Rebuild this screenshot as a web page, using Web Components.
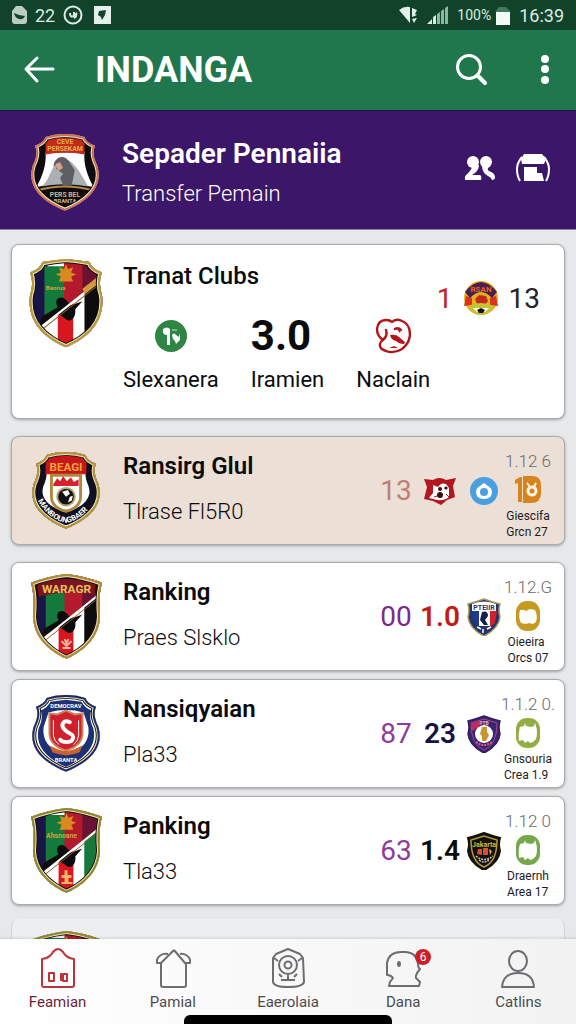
<!DOCTYPE html>
<html lang="id">

<head>
  <meta charset="UTF-8" />
  <meta name="viewport" content="width=device-width, initial-scale=1.0" />
  <title>INDANGA</title>
  <style>
    body {
      margin: 0;
      font-family: Roboto, "Liberation Sans", sans-serif;
      color: #0b0b0d;
    }
  </style>
</head>

<body>
  <app-shell>
    <status-bar slot="top"></status-bar>
    <app-bar slot="top">INDANGA</app-bar>
    <club-banner slot="top">
      <club-crest slot="crest" kind="eagle"></club-crest>
      Sepader Pennaiia
      <span slot="subtitle">Transfer Pemain</span>
    </club-banner>

    <match-card>
      <club-crest slot="crest" kind="stripes"></club-crest>
      Tranat Clubs
      <club-mark slot="home" kind="green"></club-mark>
      <span slot="home-name">Slexanera</span>
      <span slot="score">3.0</span>
      <span slot="score-name">Iramien</span>
      <club-mark slot="away" kind="face"></club-mark>
      <span slot="away-name">Naclain</span>
      <span slot="lost">1</span>
      <club-mark slot="rival" kind="round"></club-mark>
      <span slot="won">13</span>
    </match-card>

    <rank-card tone="sand" style="--first: #c07f74">
      <club-crest slot="crest" kind="ball"></club-crest>
      Ransirg Glul
      <span slot="subtitle">Tlrase Fl5R0</span>
      <span slot="first">13</span>
      <club-mark slot="second" kind="bear"></club-mark>
      <club-mark slot="emblem" kind="blue"></club-mark>
      <span slot="date">1.12 6</span>
      <club-mark slot="chip" kind="orange"></club-mark>
      <span slot="note">Giescifa<br>Grcn 27</span>
    </rank-card>

    <card-group>
      <rank-card style="--first: #7b2a8c; --second: #c41a14">
        <club-crest slot="crest" kind="banner"></club-crest>
        Ranking
        <span slot="subtitle">Praes Slsklo</span>
        <span slot="first">00</span>
        <span slot="second">1.0</span>
        <club-mark slot="emblem" kind="tricolor"></club-mark>
        <span slot="date">1.12.G</span>
        <club-mark slot="chip" kind="gold"></club-mark>
        <span slot="note">Oieeira<br>Orcs 07</span>
      </rank-card>
      <rank-card style="--first: #8e3c9c; --second: #1a1240">
        <club-crest slot="crest" kind="navy"></club-crest>
        Nansiqyaian
        <span slot="subtitle">Pla33</span>
        <span slot="first">87</span>
        <span slot="second">23</span>
        <club-mark slot="emblem" kind="violet"></club-mark>
        <span slot="date">1.1.2 0.</span>
        <club-mark slot="chip" kind="lime"></club-mark>
        <span slot="note">Gnsouria<br>Crea 1.9</span>
      </rank-card>
      <rank-card style="--first: #8e3c9c; --second: #0b0b0d">
        <club-crest slot="crest" kind="garuda"></club-crest>
        Panking
        <span slot="subtitle">Tla33</span>
        <span slot="first">63</span>
        <span slot="second">1.4</span>
        <club-mark slot="emblem" kind="black"></club-mark>
        <span slot="date">1.12 0</span>
        <club-mark slot="chip" kind="leaf"></club-mark>
        <span slot="note">Draernh<br>Area 17</span>
      </rank-card>
      <rank-card tone="faded">
        <club-crest slot="crest" kind="garuda"></club-crest>
        pemad
      </rank-card>
    </card-group>

    <tab-bar slot="bottom">
      <tab-item icon="home" active>Feamian</tab-item>
      <tab-item icon="house">Pamial</tab-item>
      <tab-item icon="camera">Eaerolaia</tab-item>
      <tab-item icon="head" badge="6">Dana</tab-item>
      <tab-item icon="person">Catlins</tab-item>
    </tab-bar>
  </app-shell>

  <script>
    // Shield outlines: [path, viewBox, width]
    const tall = ["M38 1Q27 2 15 4Q13 11 3 14Q7 24 3 36C0 58 12 76 38 87C64 76 76 58 73 36Q69 24 73 14Q63 11 61 4Q49 2 38 1Z", "1 0 74 88", 76];
    const wide = ["M38 1Q28 1 18 4Q16 10 7 13Q11 21 5 33C-1 52 9 68 38 80C67 68 77 52 71 33Q65 21 69 13Q60 10 58 4Q48 1 38 1Z", "2 0 72 81", 70];
    const pointed = ["M38 1Q20 3 2 10Q6 24 4 44C5 64 18 78 38 87C58 78 71 64 72 44Q70 24 74 10Q56 3 38 1Z", "0 0 76 88", 75];

    // Vertical bands with a white diagonal, shared by three of the crests
    const bands = (right) => `
      <path fill="#1b1446" d="M0 0h20v88H0z"/>
      <path fill="#147a3c" d="M17 8h20v60H17z"/>
      <path fill="#b51a2c" d="M36 0h40v50H36z"/>
      <path fill="#6b1233" d="M54 0h22v40H54z"/>
      <path fill="#fff" d="M8 72L74 18v70H8z"/>
      <path fill="#d8161f" d="M30 56l15-12v44H30z"/>
      <path fill="${right}" d="M56 33l20-15v70H56z"/>
      <path fill="#0c0b0d" d="M10 68l6-12 14-8c-4-7 1-12 7-8l6 6 11-4-7 8c1 10-6 14-11 8l-5-3z"/>
      <path stroke="#fff" stroke-width="2" d="M9 71L71 22"/>
      <path stroke="#8a5a26" stroke-width="1" d="M13 71L71 25"/>`;

    const star = `<path fill="#d98a1f" d="M38 6l2 5 5-2-2 5 5 2-5 2 2 5H31l2-5-5-2 5-2-2-5 5 2z"/>`;

    const crests = {
      eagle: [wide, "#c9705a", `
        <path fill="#0e0c10" d="M0 0h76v88H0z"/>
        <path fill="#fdfdfd" d="M18 20h40c-1 12 3 25 10 36-18-5-42-5-60 0 7-11 11-24 10-36z"/>
        <path fill="#c42a1c" d="M18 2h40v20q-20-4-40 0z"/>
        <path fill="#aab0b4" d="M14 55c8-6 9-18 16-26l8-2c9 1 17 16 24 28-18-3-32-3-48 0z"/>
        <path fill="#5d5f63" d="M27 30c4-7 11-7 15-1l6 9-3 16H36l-3-8 3-4-7-5 1-4-4 1z"/>
        <path fill="#d6a08c" d="M28 32l5-2 3 6-5 3z"/>
        <path fill="none" stroke="#b48a44" stroke-width="2" d="M9 59q29-8 58 0"/>
        <g fill="#e8b04a" font-size="7" font-weight="700" text-anchor="middle">
          <text x="38" y="11">CEVE</text><text x="38" y="19">PERSEKAM</text>
          <text x="38" y="66" fill="#c8b68a">PERS BEL</text><text x="38" y="72" fill="#c8b68a" font-size="6">BRANTA</text>
        </g>`],
      stripes: [tall, "#b59b3c", `${bands("#0c0c0e")}${star}
        <path fill="#d79a3a" d="M54 30l14-11 2 5-14 11z"/>
        <text x="28" y="31" fill="#cfa33c" font-size="6" font-weight="700" text-anchor="middle">Beorua</text>`],
      ball: [wide, "#b3923a", `
        <path fill="#0e1020" d="M0 0h76v88H0z"/>
        <path fill="#fff" d="M18 23h40c0 10 5 13 4 21-2 10-13 16-24 19-11-3-22-9-24-19-1-8 4-11 4-21z"/>
        <path fill="#c8161c" d="M17 2h42v22H17z"/>
        <path fill="#fff" stroke="#b08a3c" stroke-width="3" d="M23 25h30v22q0 11-15 15-15-4-15-15z"/>
        <path fill="#d6202a" d="M25 34l4-6 3 3 3-5 4 5 4-4 3 5 5-3v7H25z"/>
        <circle cx="38" cy="47" r="10" fill="#b9a06c"/>
        <circle cx="38" cy="47" r="8" fill="#101012"/>
        <path fill="#fff" d="M34 42l6-2 2 4-4 3zM42 47l3-1-1 5-4 2z"/>
        <text x="38" y="21" fill="#f0a53a" font-size="12" font-weight="700" text-anchor="middle">BEAGI</text>
        <path id="arc" fill="none" d="M9 51Q20 71 38 74Q56 71 67 51"/>
        <text fill="#fff" font-size="8" font-weight="700"><textPath href="#arc">MANBOUNGBAER</textPath></text>`],
      banner: [pointed, "#b08a35", `${bands("#0c0c0e")}
        <path fill="#2a0a10" d="M0 0h76v22Q38 14 4 26z"/>
        <path fill="#7c1420" d="M8 10Q38 2 68 10l-2 12Q38 16 10 24z"/>
        <text x="38" y="20" fill="#e8c05a" font-size="12" font-weight="700" text-anchor="middle">WARAGR</text>
        <path fill="none" stroke="#f0b7a0" stroke-width="2" d="M33 69l5 5 5-5M34 76h8M36 67l2 4 2-4"/>`],
      navy: [wide, "#1a2c6b", `
        <path fill="#fff" d="M0 0h76v88H0z"/>
        <path fill="#1d3274" d="M38 6L22 8Q19 14 12 17Q15 24 10 35C6 51 15 65 38 75C61 65 70 51 66 35Q61 24 64 17Q57 14 54 8Z"/>
        <path fill="#fff" d="M20 19Q38 14 56 19L61 34C63 49 53 59 38 63C23 59 13 49 15 34Z"/>
        <path fill="#d0202c" stroke="#c9825c" stroke-width="2" d="M21 20l8 1 9-4 9 4 8-1v20q0 13-17 18-17-5-17-18z"/>
        <path fill="none" stroke="#fff" stroke-width="4" stroke-linecap="round" d="M42 29c-6-3-10 2-6 7s11 5 9 10-11 4-13 1"/>
        <path fill="none" stroke="#fff" stroke-width="1" d="M25 27v16q1 6 6 9M51 27v16q-1 6-5 9"/>
        <path fill="#c9622c" d="M21 53l9 4q8 3 16 0l9-4-3 7q-14 6-28 0z"/>
        <g fill="#fff" font-size="6" font-weight="700" text-anchor="middle">
          <text x="38" y="14">DEMOCRAV</text><text x="38" y="70">BRANTA</text>
        </g>`],
      garuda: [pointed, "#8f8a2c", `${bands("#15793d")}${star}
        <text x="33" y="31" fill="#cfa33c" font-size="7" font-weight="700" text-anchor="middle">Ahsnoane</text>
        <path fill="#f0b76a" d="M36 64h3v5h4v3h-3v4h4v2H33v-2h3v-4h-3v-3h3z"/>`],
    };

    class ClubCrest extends HTMLElement {
      connectedCallback() {
        const [[shape, box, width], rim, art] = crests[this.getAttribute("kind")];
        this.attachShadow({ mode: "open" }).innerHTML = `
          <style>
            :host { display: block; width: ${width}px; }
            svg { display: block; width: 100%; height: auto; }
          </style>
          <svg viewBox="${box}" aria-hidden="true">
            <clipPath id="shield"><path d="${shape}"/></clipPath>
            <g clip-path="url(#shield)">${art}
              <path d="${shape}" fill="none" stroke="#14110c" stroke-width="8"/>
              <path d="${shape}" fill="none" stroke="#f3e3c0" stroke-width="6"/>
              <path d="${shape}" fill="none" stroke="${rim}" stroke-width="4"/>
            </g>
          </svg>`;
      }
    }

    const small = "M18 1Q10 4 2 6Q4 12 2 19C3 29 10 34 18 38C26 34 33 29 34 19Q32 12 34 6Q26 4 18 1Z";
    const chip = (color, cut) => `
      <rect x="1" y="0" width="24" height="30" rx="11" fill="${color}"/>
      <path fill="#fff" d="${cut}"/>`;
    const ragged = "M5 9l4-1 1-3 1 3 5 1 3-1 1-3 1 3q2 6 0 13l-3 3-3 1-2-2-3 2-2-3-4 1Q3 15 5 9z";

    const marks = {
      green: [32, 32, `<circle cx="16" cy="16" r="16" fill="#2e8544"/>
        <path fill="#fff" d="M8 9q4-3 7 0v16h-3V15q-5 0-4-6zM17 15q2-3 4 0l3 2 1-4v7l-4 4q0-3-3-5z"/>
        <path stroke="#cfe6d4" d="M17 10h5"/>`],
      face: [36, 38, `<path fill="none" stroke="#b5141a" stroke-width="2.4" stroke-linejoin="round" stroke-linecap="round"
        d="M11 13q2 6-3 10-6-4-6-11 1-9 9-9 4 0 6 2 4-4 10-1 8 3 8 14-1 9-8 14-8 5-16 2-7-2-6-7 0-2 3-4M20 12q3-2 6 1"/>
        <path fill="#b5141a" d="M15 18q6-1 9 2l6 5-1 2q-5 0-8-3-5-1-6-6zM14 31l5-2 4 2zM21 11l5 1-1 4z"/>`],
      round: [36, 36, `<circle cx="18" cy="18" r="17" fill="#e3b020"/>
        <path fill="#d8361c" d="M1 26l2-10 6 2v7zM35 26l-2-10-6 2v7z"/>
        <path fill="#4a1f4d" d="M2 12Q18-8 34 12l-5 6Q18 6 7 18z"/>
        <text x="18" y="12" fill="#e8622c" font-size="8" font-weight="700" text-anchor="middle">RSAN</text>
        <path fill="#c42a1c" d="M12 19l4-4 7 1 2 5-4 5h-6z"/>
        <path fill="#c3c432" d="M5 26q13-6 26 0-5 9-13 9T5 26z"/>
        <path fill="#fff" d="M10 28h16l-4 4h-8z"/>
        <path fill="#14110f" d="M14 30l4-2 4 2-2 3h-4z"/>`],
      bear: [34, 30, `<path fill="#b5161e" d="M1 3l9 1q6-4 13 0l10-2-3 8 2 11-8 3-6 5-8-4-9-2 3-12z"/>
        <path fill="#fff" d="M10 9l5 2q3-5 8-3l3 4v9q-5 4-12 3l-8-2q2-3 4-5z"/>
        <circle cx="17" cy="13" r="2" fill="#3a0a0c"/><circle cx="23" cy="12" r="1.6" fill="#3a0a0c"/><circle cx="17" cy="19" r="3" fill="#3a0a0c"/>
        <path stroke="#b5161e" d="M23 18l3 3M11 21l3-1"/>`],
      blue: [28, 28, `<circle cx="14" cy="14" r="14" fill="#4a9fe0"/>
        <path fill="#fff" d="M14 6l4 3q4 2 4 6 0 7-8 7t-8-7q0-4 4-6z"/>
        <circle cx="14" cy="15" r="4" fill="#4a9fe0"/>`],
      orange: [28, 30, `<path fill="#d8841c" d="M1 5l5-3h2v25H4V8L1 9zM9 1h9q9 0 9 9v8q0 10-10 10H9z"/>
        <circle cx="18" cy="16" r="4" fill="none" stroke="#fdf3e4" stroke-width="3"/>
        <path stroke="#fdf3e4" stroke-width="2" d="M13 8l3 4M22 8l-2 4"/>`],
      gold: [26, 30, chip("#c79a22", "M5 9l4 0 2 1 4-2 5 1q3 6 1 12l-3 2-4-1-3 1-5-1q-3-6-1-13z")],
      lime: [26, 30, chip("#93ad42", ragged)],
      leaf: [26, 30, chip("#74a84c", ragged)],
      tricolor: [36, 38, `<path fill="#26336a" stroke="#a59a5c" stroke-width="1.5" d="${small}"/>
        <path fill="#fff" d="M6 6q12-5 24 0v7H6z"/><path fill="#1d3a8c" d="M5 13h8v15l-5-4z"/>
        <path fill="#fff" d="M13 12h11v16H13z"/><path fill="#d0222c" d="M24 13h7l-2 12-5 4z"/>
        <path fill="#14204c" d="M16 14q6-2 6 4l-3 4 3 5h-4l-4-5z"/>
        <text x="18" y="12" fill="#26336a" font-size="7" font-weight="700" text-anchor="middle">PTEIIR</text>
        <path stroke="#fff" stroke-width="1.5" d="M11 29l4 2M17 31v4M21 31l4-2"/>`],
      violet: [36, 38, `<path fill="#3b2470" stroke="#34205c" stroke-width="1.5" d="${small}"/>
        <path fill="none" stroke="#a04a8a" d="M18 4L5 8q0 22 13 27Q31 30 31 8z"/>
        <path fill="#c42a5c" d="M6 8l7-2v6l-7 4z"/>
        <circle cx="18" cy="19" r="9" fill="#fff"/>
        <path fill="#c9952e" d="M16 12h5v5l2 3-3 6h-4v-5l-2-2z"/>
        <text x="18" y="10" fill="#e5b8d8" font-size="5" font-weight="700" text-anchor="middle">PTB</text>
        <path stroke="#e0588a" stroke-width="2" stroke-dasharray="2 1" fill="none" d="M10 27q8 6 16 0"/>`],
      black: [36, 38, `<path fill="#121110" stroke="#14120c" stroke-width="2" d="${small}"/>
        <path fill="none" stroke="#b59a34" stroke-width="1.5" d="M18 4L5 8q0 22 13 27Q31 30 31 8z"/>
        <text x="18" y="15" fill="#d8b83a" font-size="7" font-weight="700" text-anchor="middle">Jakarta</text>
        <path fill="#d8502c" d="M12 17l4 0 0 6-5-1zM17 16h5v7h-5z"/>
        <path fill="#e8a06a" d="M23 17l3 2-2 4z"/>
        <path stroke="#c9c4b4" stroke-width="1.5" stroke-dasharray="2 1" fill="none" d="M10 24q8 7 17 0M13 28q5 4 10 0"/>`],
    };

    class ClubMark extends HTMLElement {
      connectedCallback() {
        const [w, h, art] = marks[this.getAttribute("kind")];
        this.attachShadow({ mode: "open" }).innerHTML = `
          <style>
            :host { display: block; }
            svg { display: block; }
          </style>
          <svg width="${w}" height="${h}" viewBox="0 0 ${w} ${h}" aria-hidden="true">${art}</svg>`;
      }
    }

    class AppShell extends HTMLElement {
      connectedCallback() {
        this.attachShadow({ mode: "open" }).innerHTML = `
          <style>
            :host {
              display: flex;
              flex-direction: column;
              height: 100vh;
              background: #e7e8e9;
            }
            main {
              flex: 1;
              min-height: 0;
              overflow: hidden;
              display: flex;
              flex-direction: column;
              gap: 17px;
              padding: 14px 11px 0;
            }
            ::slotted(*) { flex: none; }
          </style>
          <slot name="top"></slot>
          <main><slot></slot></main>
          <slot name="bottom"></slot>`;
      }
    }

    class StatusBar extends HTMLElement {
      connectedCallback() {
        this.attachShadow({ mode: "open" }).innerHTML = `
          <style>
            :host {
              display: flex;
              justify-content: space-between;
              align-items: center;
              height: 30px;
              padding: 0 12px;
              background: #10432a;
              color: #dcebe2;
              font-size: 18px;
            }
            div { display: flex; align-items: center; gap: 8px; }
            .battery { font-size: 14px; margin: 0 -4px 0 0; }
            svg { display: block; }
          </style>
          <div>
            <svg width="15" height="20" viewBox="0 0 15 20"><path fill="#b9cdc2" d="M4 1h6l5 5v10q0 3-3 3H3q-3 0-3-3V6z"/><path fill="#10432a" d="M2 8l5 2 6 1q-2 4-6 3-4-1-5-6z"/></svg>
            <span>22</span>
            <svg width="20" height="20" viewBox="0 0 20 20" fill="none" stroke="#dcebe2" stroke-width="2"><circle cx="10" cy="10" r="8.5"/><path d="M7 8q0 5 4 3V7M11 11l3-3M13 8q1 4-2 5"/></svg>
            <svg width="26" height="18" viewBox="0 0 26 18"><path fill="#e4f1ea" d="M3 0h17v18H3z"/><path fill="#10432a" d="M8 5l7-1-1 5-3 5-1-3-3-2z"/></svg>
          </div>
          <div>
            <svg width="20" height="18" viewBox="0 0 20 18"><path fill="#e4f1ea" d="M0 4q5-4 11-3v16zM13 2l5 2-2 4 2 1-5 2zM13 13l5-1-3 5z"/></svg>
            <svg width="22" height="18" viewBox="0 0 22 18"><path fill="#dcebe2" d="M0 18l5-5v5zM6 18v-7l3-2v9z"/><path fill="#8fb5a0" d="M10 8l3-2v12h-3zM14 5l3-2v15h-3zM18 2l3-2v18h-3z"/></svg>
            <span class="battery">100%</span>
            <svg width="16" height="19" viewBox="0 0 16 19"><path fill="#3f7a5b" d="M4 1h7l5 5H0z"/><path fill="#f2faf6" d="M1 6h14v13H1z"/></svg>
            <span>16:39</span>
          </div>`;
      }
    }

    class AppBar extends HTMLElement {
      connectedCallback() {
        this.attachShadow({ mode: "open" }).innerHTML = `
          <style>
            :host {
              display: flex;
              align-items: center;
              height: 80px;
              padding: 0 8px 0 16px;
              background: #21774d;
              color: #fff;
            }
            button {
              all: unset;
              outline: revert;
              display: grid;
              place-items: center;
              width: 46px;
              height: 46px;
            }
            h1 { flex: 1; margin: 0 0 0 33px; font-size: 36px; font-weight: 700; line-height: 40px; }
            .more { margin-left: 27px; }
            svg { fill: none; stroke: currentColor; stroke-width: 3; stroke-linecap: round; stroke-linejoin: round; }
          </style>
          <button aria-label="Back"><svg width="32" height="30" viewBox="0 0 32 30"><path d="M30 14H3M14 3L3 14l11 12"/></svg></button>
          <h1><slot></slot></h1>
          <button aria-label="Search"><svg width="32" height="32" viewBox="0 0 32 32"><circle cx="13" cy="13" r="11.5"/><path stroke-width="4" d="M22 22l7 7"/></svg></button>
          <button class="more" aria-label="More"><svg width="10" height="30" viewBox="0 0 10 30" style="fill: currentColor; stroke: none"><circle cx="5" cy="4" r="4"/><circle cx="5" cy="14" r="4"/><circle cx="5" cy="25" r="4"/></svg></button>`;
      }
    }

    class ClubBanner extends HTMLElement {
      connectedCallback() {
        this.attachShadow({ mode: "open" }).innerHTML = `
          <style>
            :host {
              display: flex;
              align-items: center;
              box-sizing: border-box;
              height: 120px;
              padding: 0 20px 0 27px;
              border-top: 1px solid #1b1745;
              border-bottom: 1px solid #8d80a3;
              background: #3c1668;
              color: #fff;
            }
            ::slotted(club-crest) { margin: 4px 3px 0; }
            .text { flex: 1; margin-left: 19px; padding-top: 6px; }
            h2 { margin: 0; font-size: 28px; font-weight: 600; line-height: 32px; }
            p { margin: 10px 0 0; font-size: 22px; font-weight: 300; line-height: 28px; }
            .actions { display: flex; gap: 7px; margin-bottom: 4px; }
            button {
              all: unset;
              outline: revert;
              display: grid;
              place-items: center;
              width: 46px;
              height: 46px;
            }
            button svg { fill: currentColor; }
          </style>
          <slot name="crest"></slot>
          <div class="text">
            <h2><slot></slot></h2>
            <p><slot name="subtitle"></slot></p>
          </div>
          <div class="actions">
            <button aria-label="Members">
              <svg width="32" height="28" viewBox="0 0 32 28"><circle cx="9" cy="8" r="6"/><circle cx="22" cy="8" r="6"/><path d="M8 12l7-1q0 6-7 10h8q2 1 1 5H1q-1-3 1-5 6-5 6-9zM18 11l8 1q-4 3-1 5 6 2 6 6 0 3-3 3-1-3-4-4-6-3-6-11z"/></svg>
            </button>
            <button aria-label="Shop">
              <svg width="34" height="30" viewBox="0 0 34 30"><path d="M8 1h18l4 5-2 5H6L5 6zM8 14h13v6h5l2 8H8z"/><path fill="none" stroke="currentColor" stroke-width="2" d="M6 4q-5 6-5 12 0 7 3 12M28 4q5 6 5 12 0 7-3 12"/></svg>
            </button>
          </div>`;
      }
    }

    const cardStyles = `
      :host {
        display: flex;
        box-sizing: border-box;
        border: 1px solid #a9abae;
        border-radius: 8px;
        background: #fff;
        box-shadow: 0 1px 3px rgb(0 0 0 / 0.3);
      }
      .crest { flex: none; display: grid; justify-items: center; width: 76px; }
      h3 { margin: 0; font-size: 24px; line-height: 28px; white-space: nowrap; }
    `;

    class MatchCard extends HTMLElement {
      connectedCallback() {
        this.attachShadow({ mode: "open" }).innerHTML = `
          <style>
            ${cardStyles}
            :host { align-items: flex-start; min-height: 175px; padding: 13px 24px 0 16px; }
            .body { flex: 1; min-width: 0; margin-left: 19px; padding-top: 4px; }
            h3 { font-weight: 500; }
            .teams {
              display: grid;
              grid-template-columns: repeat(3, max-content);
              grid-template-rows: 60px 28px;
              column-gap: 32px;
              margin-top: 16px;
              place-items: center;
              font-size: 22px;
              line-height: 28px;
            }
            .score { justify-self: start; font-size: 42px; font-weight: 700; }
            .record { display: flex; align-items: center; gap: 10px; height: 40px; margin-top: 20px; font-size: 28px; color: #22232c; }
            .lost { color: #c2202a; }
          </style>
          <div class="crest"><slot name="crest"></slot></div>
          <div class="body">
            <h3><slot></slot></h3>
            <div class="teams">
              <slot name="home"></slot>
              <div class="score"><slot name="score"></slot></div>
              <slot name="away"></slot>
              <slot name="home-name"></slot>
              <slot name="score-name"></slot>
              <slot name="away-name"></slot>
            </div>
          </div>
          <div class="record">
            <span class="lost"><slot name="lost"></slot></span>
            <slot name="rival"></slot>
            <slot name="won"></slot>
          </div>`;
      }
    }

    class RankCard extends HTMLElement {
      connectedCallback() {
        this.attachShadow({ mode: "open" }).innerHTML = `
          <style>
            ${cardStyles}
            :host { align-items: center; min-height: 109px; padding: 0 14px 0 16px; }
            :host([tone="sand"]) { background: #ecdfd5; }
            :host([tone="faded"]) {
              margin-top: 6px;
              background: #edeeef;
              border-color: transparent #d3d5d7;
              box-shadow: none;
            }
            .body { flex: 1; min-width: 0; margin-left: 19px; padding-bottom: 4px; }
            h3 { font-weight: 600; }
            p { min-height: 28px; margin: 18px 0 0; font-size: 22px; font-weight: 300; line-height: 28px; }
            .stats {
              display: grid;
              grid-template-columns: repeat(4, 44px);
              place-items: center;
              font-size: 28px;
              white-space: nowrap;
            }
            .first { color: var(--first); }
            .second { color: var(--second); font-weight: 600; }
            .detail { display: grid; justify-items: center; padding-top: 10px; }
            .date { font-size: 17px; font-weight: 300; line-height: 20px; color: #6b6b6f; }
            .chip { height: 30px; margin: 4px 0 3px; }
            .note { font-size: 12px; line-height: 16px; color: #1c1c1e; }
          </style>
          <div class="crest"><slot name="crest"></slot></div>
          <div class="body">
            <h3><slot></slot></h3>
            <p><slot name="subtitle"></slot></p>
          </div>
          <div class="stats">
            <div class="first"><slot name="first"></slot></div>
            <div class="second"><slot name="second"></slot></div>
            <slot name="emblem"></slot>
            <div class="detail">
              <div class="date"><slot name="date"></slot></div>
              <div class="chip"><slot name="chip"></slot></div>
              <div class="note"><slot name="note"></slot></div>
            </div>
          </div>`;
      }
    }

    class CardGroup extends HTMLElement {
      connectedCallback() {
        this.attachShadow({ mode: "open" }).innerHTML = `
          <style>
            :host { display: flex; flex-direction: column; gap: 8px; }
          </style>
          <slot></slot>`;
      }
    }

    const icons = {
      home: `<path d="M2 13q8-1 11-7 5-6 10 0 3 6 11 7v26q0 2-2 2H4q-2 0-2-2z"/><path d="M9 27h5v8H9zM21 35v-8M23 28h4v7h-4z"/>`,
      house: `<path d="M6 17v22q0 2 2 2h21q2 0 2-2V17"/><path d="M19 4L6 17H2q-1-5 4-8 3-2 7-1M19 4l11 13h5q1-5-4-8-3-2-6-1"/>`,
      camera: `<path d="M3 12l3-4 12-5 12 5 3 4 1 24q-1 5-16 5-14 0-15-5z"/><circle cx="18" cy="19" r="9"/><circle cx="18" cy="19" r="3.5"/><path d="M4 12l4 3M32 12l-4 3M11 34h14M18 29v5M9 28l3 3M27 28l-3 3"/>`,
      head: `<path d="M2 29V17Q4 6 16 6h5q11 1 12 12 0 4 2 5-5 6-4 9l4 4-1 4H4l1-4 3-4q-2-3-6-3z"/><ellipse cx="14" cy="18" rx="1" ry="2"/>`,
      person: `<ellipse cx="18" cy="15" rx="9" ry="10"/><path d="M2 41q1-14 16-14t16 14z"/>`,
    };

    class TabBar extends HTMLElement {
      connectedCallback() {
        this.attachShadow({ mode: "open" }).innerHTML = `
          <style>
            :host {
              display: block;
              background: linear-gradient(90deg, #fff, #f2f2f3);
              box-shadow: 0 -1px 3px rgb(0 0 0 / 0.12);
            }
            nav { display: flex; height: 76px; }
            .handle { width: 36%; height: 9px; margin: 0 auto; border-radius: 6px 6px 0 0; background: #000; }
          </style>
          <nav><slot></slot></nav>
          <div class="handle"></div>`;
      }
    }

    class TabItem extends HTMLElement {
      connectedCallback() {
        const badge = this.getAttribute("badge");
        this.attachShadow({ mode: "open" }).innerHTML = `
          <style>
            :host { flex: 1; color: #4c4c50; --line: #6d6e71; }
            :host([active]) { color: #6b2438; --line: #bf3438; }
            a {
              display: flex;
              flex-direction: column;
              align-items: center;
              gap: 5px;
              padding-top: 7px;
              font-size: 15px;
              line-height: 18px;
              color: inherit;
              text-decoration: none;
            }
            .icon { position: relative; }
            svg { display: block; fill: none; stroke: var(--line); stroke-width: 2; stroke-linejoin: round; }
            .badge {
              position: absolute;
              top: 3px;
              right: -10px;
              width: 16px;
              border-radius: 8px;
              background: #cc1f27;
              color: #fff;
              font-size: 12px;
              line-height: 16px;
              text-align: center;
            }
          </style>
          <a href="#${this.getAttribute("icon")}">
            <span class="icon">
              <svg width="36" height="42" viewBox="0 0 36 42" aria-hidden="true">${icons[this.getAttribute("icon")]}</svg>
              ${badge ? `<span class="badge">${badge}</span>` : ""}
            </span>
            <slot></slot>
          </a>`;
      }
    }

    customElements.define("club-crest", ClubCrest);
    customElements.define("club-mark", ClubMark);
    customElements.define("app-shell", AppShell);
    customElements.define("status-bar", StatusBar);
    customElements.define("app-bar", AppBar);
    customElements.define("club-banner", ClubBanner);
    customElements.define("match-card", MatchCard);
    customElements.define("rank-card", RankCard);
    customElements.define("card-group", CardGroup);
    customElements.define("tab-bar", TabBar);
    customElements.define("tab-item", TabItem);
  </script>
</body>

</html>
